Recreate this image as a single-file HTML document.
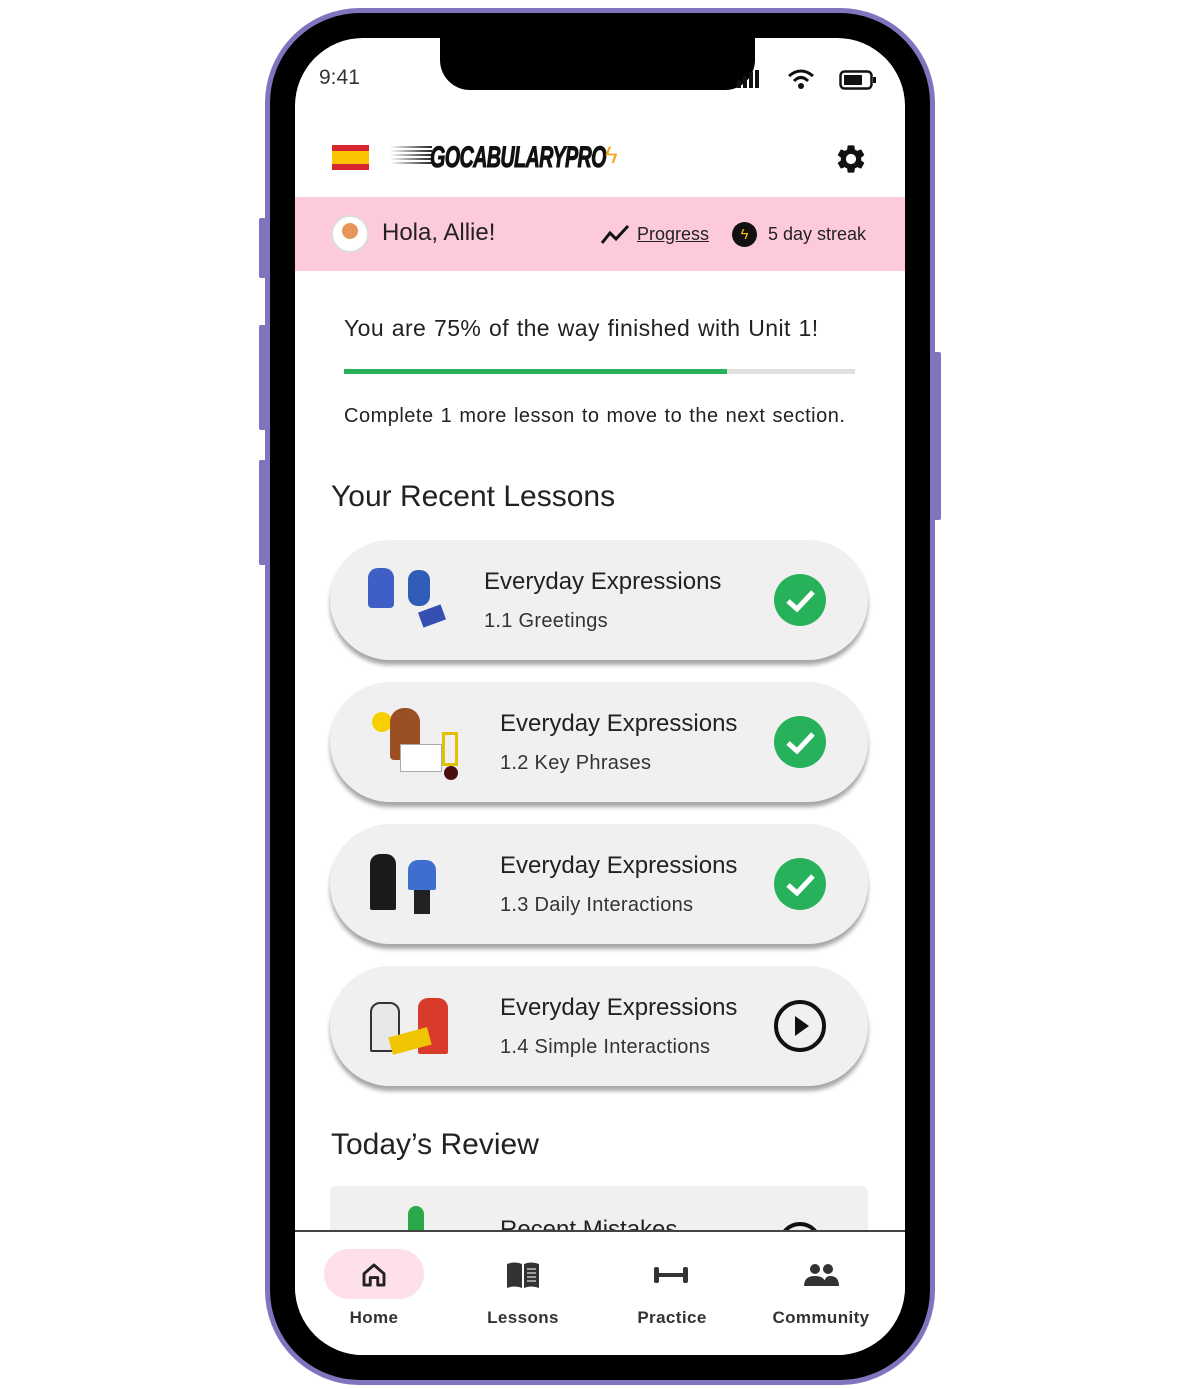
<!DOCTYPE html><html><head><style>
*{margin:0;padding:0;box-sizing:border-box}
body{width:1200px;height:1389px;background:#fff;position:relative;overflow:hidden;font-family:"Liberation Sans",sans-serif;color:#222}
.a{position:absolute}
.phone{left:265px;top:8px;width:670px;height:1377px;border-radius:95px;background:#000;border:5px solid #7f74bd}
.screen{left:295px;top:38px;width:610px;height:1317px;border-radius:68px;background:#fff;overflow:hidden}
.btn{background:#7f74bd;border-radius:2px}
.card{left:35px;width:538px;height:120px;border-radius:60px;background:#f0f0f0;box-shadow:0 5px 4px rgba(0,0,0,.35)}
.t1{font-size:24px;color:#222;position:absolute;top:28px}
.t2{font-size:20px;color:#333;position:absolute;top:70px;letter-spacing:.3px}
.ck{position:absolute;left:444px;top:34px;width:52px;height:52px;border-radius:50%;background:#27b15a}
.nav{font-size:17px;font-weight:bold;color:#333;text-align:center;width:120px;position:absolute;top:1270px;letter-spacing:.4px}
</style></head><body>
<div class="a btn" style="left:259px;top:218px;width:7px;height:60px"></div>
<div class="a btn" style="left:259px;top:325px;width:7px;height:105px"></div>
<div class="a btn" style="left:259px;top:460px;width:7px;height:105px"></div>
<div class="a btn" style="left:934px;top:352px;width:7px;height:168px"></div>
<div class="a phone"></div>
<div class="a screen">
 <div class="a" style="left:145px;top:-10px;width:315px;height:62px;background:#000;border-radius:0 0 30px 30px"></div>
 <div class="a" style="left:24px;top:28px;font-size:21px;color:#333">9:41</div>
 <div class="a" style="left:442px;top:32px;width:28px;height:18px">
  <svg width="28" height="18"><rect x="0" y="10" width="4" height="8" fill="#111"/><rect x="6" y="6" width="4" height="12" fill="#111"/><rect x="12" y="2" width="4" height="16" fill="#111"/><rect x="18" y="0" width="4" height="18" fill="#111"/></svg></div>
 <svg class="a" style="left:492px;top:30px" width="28" height="22" viewBox="0 0 28 22"><path d="M2 8 Q14 -2 26 8" stroke="#111" stroke-width="3" fill="none"/><path d="M7 13 Q14 6 21 13" stroke="#111" stroke-width="3" fill="none"/><circle cx="14" cy="18" r="3" fill="#111"/></svg>
 <svg class="a" style="left:544px;top:32px" width="38" height="20"><rect x="1.5" y="1.5" width="31" height="17" rx="4" stroke="#111" stroke-width="2.5" fill="none"/><rect x="5" y="5" width="18" height="10" fill="#111"/><rect x="34" y="7" width="3" height="6" fill="#111"/></svg>
 <div class="a" style="left:37px;top:107px;width:37px;height:25px;background:#d7262e"><div style="margin-top:6px;height:13px;background:#f8c500"></div></div>
 <div class="a" style="left:95px;top:108px;width:42px;height:20px;background:repeating-linear-gradient(#222 0 2px,transparent 2px 4px);-webkit-mask:linear-gradient(90deg,transparent,#000)"></div>
 <div class="a" style="left:135px;top:103px;font-size:30px;font-weight:bold;font-style:italic;letter-spacing:-1px;transform:scaleX(.66);transform-origin:left;color:#111;-webkit-text-stroke:1px #111;white-space:nowrap">GOCABULARYPRO</div>
 <div class="a" style="left:310px;top:104px;font-size:24px;color:#f5a623">ϟ</div>
 <svg class="a" style="left:539px;top:104px" width="34" height="34" viewBox="0 0 24 24"><path fill="#111" d="M19.14 12.94c.04-.3.06-.61.06-.94s-.02-.64-.07-.94l2.03-1.58a.49.49 0 0 0 .12-.61l-1.920-3.32a.49.49 0 0 0-.59-.22l-2.39.96c-.5-.38-1.03-.7-1.62-.94l-.36-2.54a.48.48 0 0 0-.48-.41h-3.84c-.24 0-.43.17-.47.41l-.36 2.540c-.59.24-1.13.57-1.62.94l-2.39-.96a.48.48 0 0 0-.59.22L2.74 8.87c-.12.21-.08.47.12.61l2.03 1.58c-.05.3-.09.63-.09.94s.02.64.07.94l-2.03 1.58a.49.49 0 0 0-.12.61l1.92 3.32c.12.22.37.29.59.22l2.39-.96c.5.38 1.03.7 1.62.94l.36 2.54c.05.24.24.41.48.41h3.84c.24 0 .44-.17.47-.41l.36-2.54c.59-.24 1.13-.56 1.62-.94l2.39.96c.22.08.47 0 .59-.22l1.92-3.32c.12-.22.07-.47-.12-.61l-2.010-1.58zM12 15.6A3.6 3.6 0 1 1 12 8.4a3.6 3.6 0 0 1 0 7.2z"/></svg>
 <div class="a" style="left:0;top:159px;width:610px;height:74px;background:#fdc9dc"></div>
 <div class="a" style="left:36px;top:177px;width:38px;height:38px;border-radius:50%;background:#fff;border:2px solid #ddd"><div style="margin:6px auto;width:16px;height:16px;border-radius:50%;background:#e8955a"></div></div>
 <div class="a" style="left:87px;top:181px;font-size:24px;color:#222">Hola, Allie!</div>
 <svg class="a" style="left:305px;top:185px" width="30" height="22"><path d="M2 20 L10 10 L16 16 L28 3" stroke="#111" stroke-width="3" fill="none"/></svg>
 <div class="a" style="left:342px;top:186px;font-size:18px;color:#222;text-decoration:underline">Progress</div>
 <div class="a" style="left:437px;top:184px;width:25px;height:25px;border-radius:50%;background:#111;color:#f8c500;font-size:15px;text-align:center;line-height:25px">ϟ</div>
 <div class="a" style="left:473px;top:186px;font-size:18px;color:#222">5 day streak</div>
 <div class="a" style="left:49px;top:277px;font-size:23px;color:#222;letter-spacing:.4px;word-spacing:1px">You are 75% of the way finished with Unit 1!</div>
 <div class="a" style="left:49px;top:331px;width:511px;height:5px;background:#e0e0e0"><div style="width:383px;height:5px;background:#27b15a"></div></div>
 <div class="a" style="left:49px;top:367px;font-size:20px;color:#222;letter-spacing:.5px;word-spacing:1px">Complete 1 more lesson to move to the next section.</div>
 <div class="a" style="left:36px;top:442px;font-size:30px;color:#222">Your Recent Lessons</div>
 <div class="a card" style="top:502px"><div class="a" style="left:38px;top:28px;width:26px;height:40px;background:#3e5fc6;border-radius:10px 10px 4px 4px"></div><div class="a" style="left:78px;top:30px;width:22px;height:36px;background:#2f5db8;border-radius:10px"></div><div class="a" style="left:90px;top:68px;width:24px;height:16px;background:#3550b0;transform:rotate(-20deg)"></div><div class="t1" style="left:154px">Everyday Expressions</div><div class="t2" style="left:154px">1.1 Greetings</div><div class="ck"><svg width="52" height="52"><path d="M14 27 L23 35 L39 18" stroke="#fff" stroke-width="5" fill="none"/></svg></div></div>
 <div class="a card" style="top:644px"><div class="a" style="left:42px;top:30px;width:20px;height:20px;border-radius:50%;background:#f8d000"></div><div class="a" style="left:60px;top:26px;width:30px;height:52px;background:#9a5022;border-radius:14px 14px 4px 4px"></div><div class="a" style="left:70px;top:62px;width:42px;height:28px;background:#fff;border:1px solid #aaa"></div><div class="a" style="left:112px;top:50px;width:16px;height:34px;border:3px solid #e3c000"></div><div class="a" style="left:114px;top:84px;width:14px;height:14px;border-radius:50%;background:#4a1010"></div><div class="t1" style="left:170px">Everyday Expressions</div><div class="t2" style="left:170px">1.2 Key Phrases</div><div class="ck"><svg width="52" height="52"><path d="M14 27 L23 35 L39 18" stroke="#fff" stroke-width="5" fill="none"/></svg></div></div>
 <div class="a card" style="top:786px"><div class="a" style="left:40px;top:30px;width:26px;height:56px;background:#1a1a1a;border-radius:10px 10px 2px 2px"></div><div class="a" style="left:78px;top:36px;width:28px;height:30px;background:#3e6fd0;border-radius:10px 10px 2px 2px"></div><div class="a" style="left:84px;top:66px;width:16px;height:24px;background:#222"></div><div class="t1" style="left:170px">Everyday Expressions</div><div class="t2" style="left:170px">1.3 Daily Interactions</div><div class="ck"><svg width="52" height="52"><path d="M14 27 L23 35 L39 18" stroke="#fff" stroke-width="5" fill="none"/></svg></div></div>
 <div class="a card" style="top:928px"><div class="a" style="left:40px;top:36px;width:30px;height:50px;background:#e8e8e8;border:2px solid #333;border-radius:10px 10px 2px 2px"></div><div class="a" style="left:88px;top:32px;width:30px;height:56px;background:#d93a2a;border-radius:10px 10px 2px 2px"></div><div class="a" style="left:60px;top:66px;width:40px;height:18px;background:#f0c400;transform:rotate(-15deg)"></div><div class="t1" style="left:170px">Everyday Expressions</div><div class="t2" style="left:170px">1.4 Simple Interactions</div><div class="a" style="left:444px;top:34px;width:52px;height:52px;border-radius:50%;border:4px solid #111"><svg width="44" height="44"><path d="M17 12 L31 22 L17 32Z" fill="#111"/></svg></div></div>
 <div class="a" style="left:36px;top:1090px;font-size:30px;color:#222">Today’s Review</div>
 <div class="a" style="left:35px;top:1148px;width:538px;height:60px;background:#f0f0f0;border-radius:6px"><div class="a" style="left:78px;top:20px;width:16px;height:40px;background:#2aa84a;border-radius:8px 8px 0 0"></div><div class="a" style="left:170px;top:30px;font-size:24px;color:#222">Recent Mistakes</div><div class="a" style="left:448px;top:36px;width:44px;height:44px;border-radius:50%;border:4px solid #111"></div></div>
 <div class="a" style="left:0;top:1192px;width:610px;height:125px;background:#fff;border-top:2px solid #444"></div>
 <div class="a" style="left:29px;top:1211px;width:100px;height:50px;border-radius:25px;background:#fde0ea"></div>
 <svg class="a" style="left:64px;top:1222px" width="30" height="30" viewBox="0 0 24 24"><path d="M4 11 L12 4 L20 11 V20 H15 V14 H9 V20 H4Z" stroke="#222" stroke-width="2.3" fill="none" stroke-linejoin="round"/></svg>
 <svg class="a" style="left:210px;top:1222px" width="36" height="30" viewBox="0 0 36 30"><path d="M2 4 Q10 1 17 4 V28 Q10 25 2 28Z M19 4 Q26 1 34 4 V28 Q26 25 19 28Z" fill="#333"/><path d="M22 9H31M22 13H31M22 17H31M22 21H31" stroke="#ddd" stroke-width="1.2"/></svg>
 <svg class="a" style="left:357px;top:1225px" width="38" height="24" viewBox="0 0 38 24"><rect x="2" y="4" width="5" height="16" rx="2" fill="#333"/><rect x="31" y="4" width="5" height="16" rx="2" fill="#333"/><rect x="7" y="10" width="24" height="4" fill="#333"/></svg>
 <svg class="a" style="left:507px;top:1224px" width="38" height="26" viewBox="0 0 38 26"><circle cx="13" cy="7" r="5" fill="#333"/><circle cx="26" cy="7" r="5" fill="#333"/><path d="M2 24 Q2 14 13 14 Q24 14 24 24Z M22 24 Q22 14 28 14 Q37 14 37 24Z" fill="#333"/></svg>
 <div class="nav" style="left:19px">Home</div>
 <div class="nav" style="left:168px">Lessons</div>
 <div class="nav" style="left:317px">Practice</div>
 <div class="nav" style="left:466px">Community</div>
</div>
</body></html>
